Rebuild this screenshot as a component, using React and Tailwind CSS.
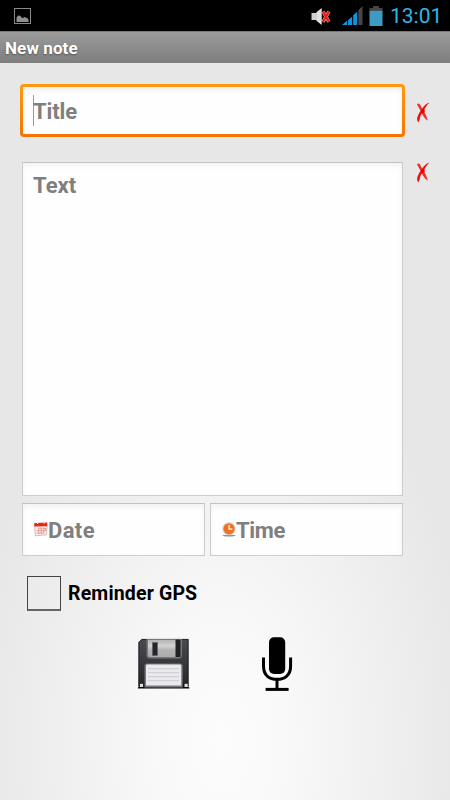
import React, { useState } from "react";

const PictureIcon = () => (
  <svg width="18" height="16" viewBox="0 0 18 16" className="block">
    <rect x="0.5" y="0.5" width="16" height="15" fill="none" stroke="#8a8a8a" />
    <path d="M2.5 14V9.5L4 7.5l2 .3 2.5 2.4 2-1.2 3 1.2 1 1.3V14z" fill="#8f8f8f" />
  </svg>
);

const MuteIcon = () => (
  <svg width="20" height="18" viewBox="0 0 20 18" className="block">
    <path d="M0.5 5h4.3L10.5 0.3v16.4L4.8 12H0.5z" fill="#cfcfcf" />
    <path d="M6 4L10.5 0.3v16.4L6 13z" fill="#e4e0dc" />
    <path d="M12 3.5l6 10.3M18 3.5l-6 10.3" stroke="#dba49c" strokeWidth="3.4" />
    <path d="M12 3.5l6 10.3M18 3.5l-6 10.3" stroke="#f01414" strokeWidth="2.2" />
  </svg>
);

const SignalIcon = () => (
  <svg width="21" height="19" viewBox="0 0 21 19" className="block">
    <path d="M0 19l5-4.5V19z" fill="#1592dc" />
    <path d="M6 14.2l4.2-3.8V19H6z" fill="#1592dc" />
    <path d="M11.2 9.2l4-3.8V19h-4z" fill="#1592dc" />
    <path d="M16.3 4.2L20.5 0v19h-4.2z" fill="#474747" />
  </svg>
);

const BatteryIcon = () => (
  <svg width="14" height="20" viewBox="0 0 14 20" className="block">
    <path d="M4 0h6v2h3.5v3H0.5V2H4z" fill="#454545" />
    <rect x="0.5" y="4.8" width="13" height="15.2" fill="#3d9bc4" />
  </svg>
);

// hand-drawn red cross that clears a field
const ClearIcon = () => (
  <svg width="14" height="21" viewBox="0 0 14 21" className="block">
    <path d="M1 2.6Q2.2 0.6 4 2.4Q5.8 6 8.4 10Q10.6 14 12 18.8Q9 17.6 5.8 11.6Q4 7.4 1 2.6z" fill="#ee3028" />
    <path d="M13.4 0.8Q10.6 3 9 6.2Q6 10.4 4.4 14Q3.8 18.5 2.2 20.4Q0.5 18.6 1.3 15.2Q3 10.5 6.6 6Q9.5 1.5 13.4 0.8z" fill="#f0100c" />
    <path d="M4.8 8.4L8.2 6.4L8.8 9.8L6 11.8z" fill="#e00804" />
  </svg>
);

const CalendarIcon = () => (
  <svg width="14" height="15" viewBox="0 0 14 15" className="block">
    <path d="M0.6 2.5h12.6l-0.7 10.3-11.2 1z" fill="#f4f1f0" stroke="#c98d86" strokeWidth="0.6" />
    <path d="M0.3 0.9l13-.4v3.7l-13 .4z" fill="#e02a16" />
    <path d="M3 1.4h1M9.5 1.2h1" stroke="#fff" strokeWidth="1" />
    <path d="M4.5 6.2h7M2.5 8.7h9M2.5 11.2h7.5M4.7 6v6M7.2 6v6M9.8 6v5M11.6 6v3" stroke="#e58d84" strokeWidth="0.8" />
  </svg>
);

const ClockIcon = () => (
  <svg width="14" height="15" viewBox="0 0 14 15" className="block">
    <ellipse cx="7" cy="13.6" rx="6.8" ry="0.9" fill="#8f8f8f" />
    <circle cx="7" cy="6.8" r="6.3" fill="#e4e4e4" stroke="#c3c3c3" strokeWidth="0.5" />
    <circle cx="7" cy="6.8" r="5.6" fill="#ee7220" />
    <path d="M7.1 3v4.1h3.2" fill="none" stroke="#fff" strokeWidth="1.3" />
  </svg>
);

const SaveIcon = () => (
  <svg width="53" height="52" viewBox="0 0 53 52" className="block">
    <defs>
      <linearGradient id="disk" x1="0" y1="0" x2="0" y2="1">
        <stop offset="0" stopColor="#4a4c50" />
        <stop offset="0.5" stopColor="#36383b" />
        <stop offset="0.85" stopColor="#292a2d" />
        <stop offset="1" stopColor="#050505" />
      </linearGradient>
      <linearGradient id="shutter" x1="0" y1="0" x2="0" y2="1">
        <stop offset="0" stopColor="#b4b4b4" />
        <stop offset="0.35" stopColor="#d2d2d2" />
        <stop offset="0.6" stopColor="#b2b2b2" />
        <stop offset="1" stopColor="#acacac" />
      </linearGradient>
    </defs>
    <path d="M1.5 4.2L4.7 1H51.5v48q1 0 1 1.5H0.8Q0.8 49 1.5 49z" fill="url(#disk)" />
    <path d="M1.9 48V4.4L4.9 1.4H51.1V48" fill="none" stroke="#1b1c1e" strokeWidth="0.8" />
    <path d="M9.5 1h35.5v16q0 3.5-3.5 3.5H13q-3.5 0-3.5-3.5z" fill="#77787b" />
    <path d="M11 2h28V19H13.5q-2.5 0-2.5-2.5z" fill="url(#shutter)" />
    <path d="M38.5 1.6h5v17.4h-5z" fill="#202124" />
    <rect x="15.5" y="4.5" width="5" height="13" fill="#242529" stroke="#5f6064" strokeWidth="0.6" />
    <path d="M7.5 28q0-2.6 2.6-2.6h33q2.6 0 2.6 2.6v21.5H7.5z" fill="#77777d" />
    <path d="M9 28q0-1.4 1.4-1.4h32.4q1.4 0 1.4 1.4v19.5H9z" fill="#e9e9ee" />
    <path d="M11 30.7h31M11 34.7h31M11 38.7h31M11 42.7h31" stroke="#cacacf" strokeWidth="1" />
    <rect x="2.9" y="45.8" width="3.2" height="3.2" fill="#dedede" />
    <rect x="47.5" y="45.8" width="3.2" height="3.2" fill="#dedede" />
  </svg>
);

const MicIcon = () => (
  <svg width="32" height="55" viewBox="0 0 32 55" className="block">
    <rect x="8" y="0.3" width="16.2" height="36.7" rx="5" fill="#000" />
    <path d="M2.5 20.5V29Q2.5 36 6.5 39.3Q10 42.3 16 42.3Q22 42.3 25.5 39.3Q29.6 36 29.6 29V20.5" fill="none" stroke="#000" strokeWidth="3" />
    <path d="M16 42v10" stroke="#000" strokeWidth="3" />
    <path d="M4.6 52.4h23" stroke="#000" strokeWidth="3" />
  </svg>
);

const fieldClass =
  "bg-[#fefefe] border border-[#cccccc] border-t-[#c2c2c2] shadow-[inset_0_3px_5px_rgba(0,0,0,0.05)] text-[#7f7f7f] text-[22px] leading-[26px] font-bold";

export default function App() {
  const [gps, setGps] = useState(false);

  return (
    <div className="w-[450px] h-[800px] overflow-hidden flex flex-col bg-[radial-gradient(ellipse_250px_430px_at_222px_740px,#fcfcfc_0%,#f9f9f9_25%,#e7e7e7_100%)] font-['Roboto','Liberation_Sans',sans-serif]">
      {/* status bar */}
      <div className="h-[31px] shrink-0 bg-black flex items-center justify-between pl-[14px] pr-[9px]">
        <PictureIcon />
        <div className="flex items-center">
          <div className="pt-[2px]"><MuteIcon /></div>
          <div className="ml-[11px]"><SignalIcon /></div>
          <div className="ml-[6px] mr-[7px]"><BatteryIcon /></div>
          <span className="text-[#33b5e5] text-[21px] leading-[29px] pt-[2px] w-[51px] whitespace-nowrap">13:01</span>
        </div>
      </div>

      {/* title bar */}
      <header className="h-[32px] shrink-0 bg-linear-to-b from-[#9b9b9b] to-[#7e7e7e] border-t border-t-[#777777] flex items-center pl-[5px]">
        <h1 className="text-white text-[17px] tracking-[0.1px] font-bold leading-8 [text-shadow:0_1px_2px_#555]">New note</h1>
      </header>

      <main className="pt-[21px] pl-5 pr-5 flex flex-col">
        <div className="flex">
          <div className="w-[385px] h-[53px] rounded-[4px] p-[3px] bg-linear-to-b from-[#ff9a12] to-[#f47500]">
            <div className="h-full rounded-[1px] bg-[#fefefe] shadow-[inset_0_3px_5px_rgba(0,0,0,0.06)] flex items-center pl-[10px]">
              <span className="w-px h-[31px] bg-[#999999] -mr-px" />
              <span className="text-[#7f7f7f] text-[22px] leading-[26px] pt-[2px] font-bold tracking-[-0.1px]">Title</span>
            </div>
          </div>
          <button className="ml-[11px] mt-[18px] self-start"><ClearIcon /></button>
        </div>

        <div className="flex mt-[25px] pl-[2px]">
          <div className={`w-[381px] h-[334px] pl-[10px] pt-[10px] ${fieldClass}`}>Text</div>
          <button className="ml-[13px] self-start"><ClearIcon /></button>
        </div>

        <div className="flex gap-[5px] mt-[7px] pl-[2px]">
          <div className={`w-[183px] h-[53px] flex items-center pl-[11px] ${fieldClass}`}>
            <CalendarIcon />
            <span className="pt-[2px] tracking-[0.4px]">Date</span>
          </div>
          <div className={`w-[193px] h-[53px] flex items-center pl-[11px] ${fieldClass}`}>
            <ClockIcon />
            <span className="pt-[2px] tracking-[-0.3px]">Time</span>
          </div>
        </div>

        <div className="flex items-center mt-[20px] pl-[7px] gap-[7px] cursor-pointer" onClick={() => setGps(!gps)}>
          <span className="w-[34px] h-[35px] border border-[#444444] border-b-2 border-b-[#666666] flex items-center justify-center text-xl">
            {gps ? "✓" : ""}
          </span>
          <span className="text-black text-[19.5px] leading-7 pt-px tracking-[0.16px] font-bold">Reminder GPS</span>
        </div>

        <div className="flex items-start mt-[26px] pl-[117px]">
          <button className="mt-px"><SaveIcon /></button>
          <button className="ml-[71px]"><MicIcon /></button>
        </div>
      </main>
    </div>
  );
}
